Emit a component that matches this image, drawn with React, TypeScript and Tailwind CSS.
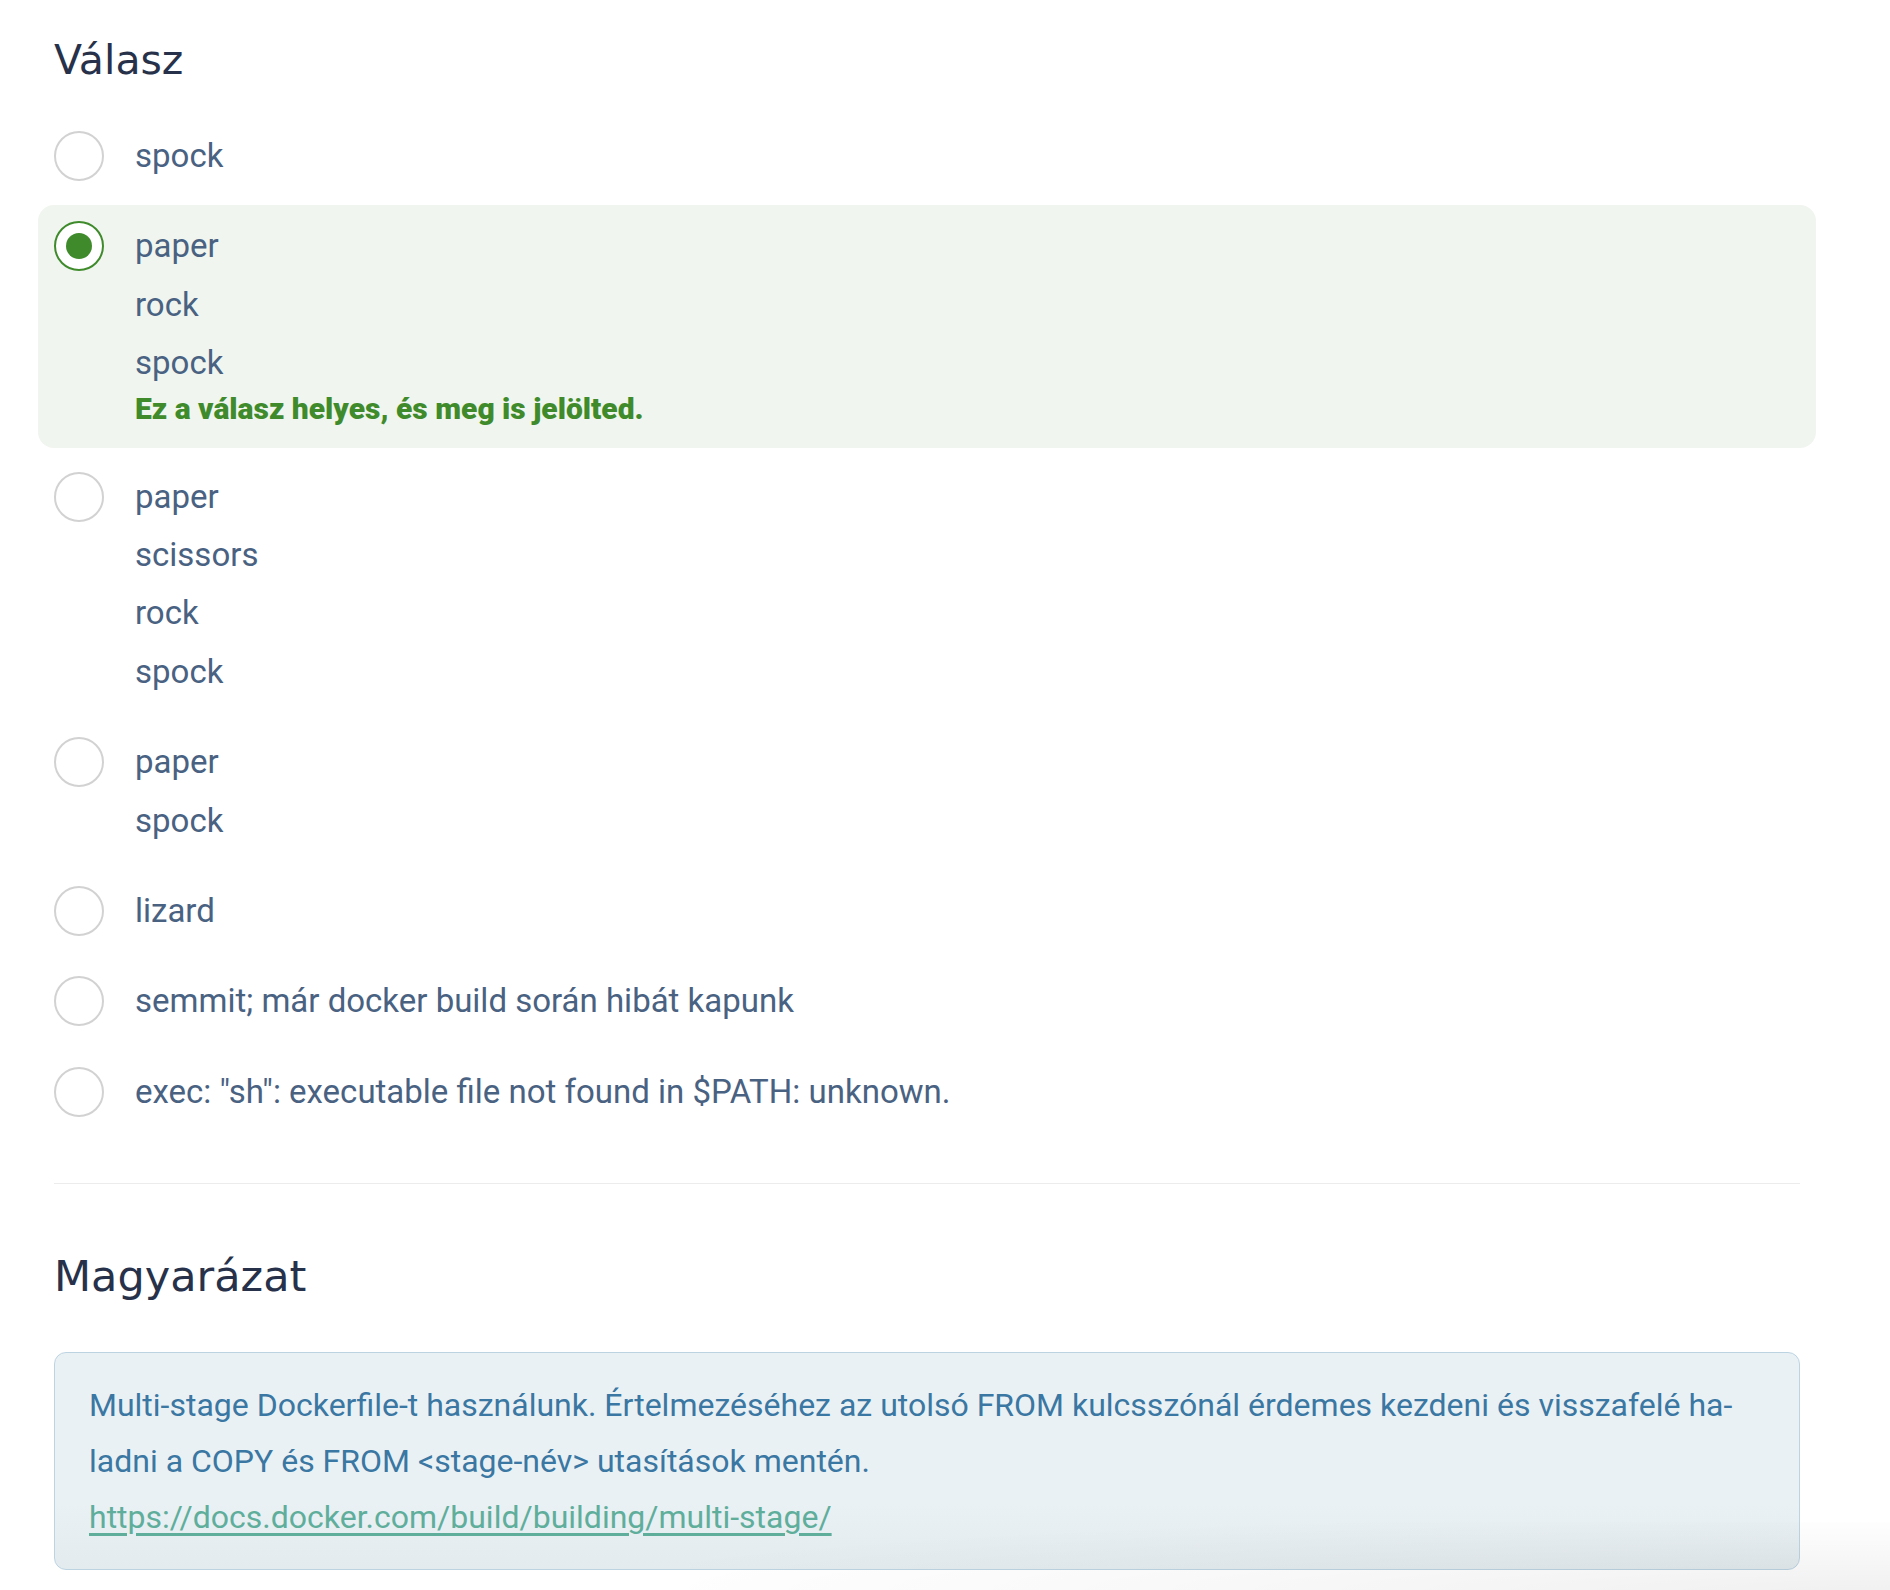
import React from 'react';

type Option = { lines: string[]; selected?: boolean; feedback?: string };

const OPTIONS: Option[] = [
  { lines: ['spock'] },
  { lines: ['paper', 'rock', 'spock'], selected: true, feedback: 'Ez a válasz helyes, és meg is jelölted.' },
  { lines: ['paper', 'scissors', 'rock', 'spock'] },
  { lines: ['paper', 'spock'] },
  { lines: ['lizard'] },
  { lines: ['semmit; már docker build során hibát kapunk'] },
  { lines: ['exec: "sh": executable file not found in $PATH: unknown.'] },
];

function Radio({ checked }: { checked?: boolean }) {
  return (
    <div className="h-[58px] flex items-center shrink-0">
      <div
        className={`w-[50px] h-[50px] rounded-full flex items-center justify-center bg-white border-2 ${checked ? 'border-[#3f8b2c]' : 'border-[#d2d2d2]'}`}
      >
        {checked && <div className="w-[26px] h-[26px] rounded-full bg-[#3f8b2c]" />}
      </div>
    </div>
  );
}

export default function App() {
  return (
    <div className="relative min-h-screen overflow-hidden bg-white font-['Roboto',sans-serif]" lang="hu">
      <div className="ml-[54px] w-[1746px] pt-[36px] pb-[22px]">
        <h2 className="font-['DejaVu_Sans',sans-serif] text-[41px] leading-[48px] text-[#27324a]">Válasz</h2>

        {/* Options */}
        <div className="mt-[31px] -mx-4 flex flex-col gap-[8px]">
          {OPTIONS.map((opt, i) => (
            <div
              key={i}
              className={`flex gap-[31px] px-4 py-3 rounded-2xl ${opt.selected ? 'bg-[#f0f5ef]' : ''}`}
            >
              <Radio checked={opt.selected} />
              <div className="text-[33px] leading-[58.4px] text-[#4a6282]">
                {opt.lines.map((l, j) => (
                  <div key={j}>{l}</div>
                ))}
                {opt.feedback && (
                  <div className="text-[30px] leading-[43px] font-black text-[#3f8b2c] -mt-[6px] pb-[6px]">{opt.feedback}</div>
                )}
              </div>
            </div>
          ))}
        </div>

        <hr className="mt-[50px] border-0 border-t border-[#ececec]" />

        <h2 className="mt-[67px] font-['DejaVu_Sans',sans-serif] text-[43px] leading-[50px] text-[#27324a]">Magyarázat</h2>

        {/* Explanation */}
        <div className="mt-[51px] rounded-xl border border-[#bcd3e2] bg-gradient-to-b from-[#eaf1f5] from-70% to-[#e3ebef] px-[34px] py-[24px] text-[32px] leading-[56px] text-[#3a77a2]">
          <p>
            Multi-stage Dockerfile-t használunk. Értelmezéséhez az utolsó FROM kulcsszónál érdemes kezdeni és visszafelé ha-
            <br />
            ladni a COPY és FROM &lt;stage-név&gt; utasítások mentén.
          </p>
          <p>
            <a href="#" className="text-[#5fae9b] underline underline-offset-[5px]">
              https://docs.docker.com/build/building/multi-stage/
            </a>
          </p>
        </div>
      </div>

      {/* faint shadow at the bottom edge */}
      <div className="pointer-events-none absolute bottom-0 right-0 w-[1200px] h-[70px] bg-[radial-gradient(ellipse_at_bottom_right,rgba(0,0,0,0.06),rgba(0,0,0,0.02)_50%,transparent_80%)]" />
    </div>
  );
}
